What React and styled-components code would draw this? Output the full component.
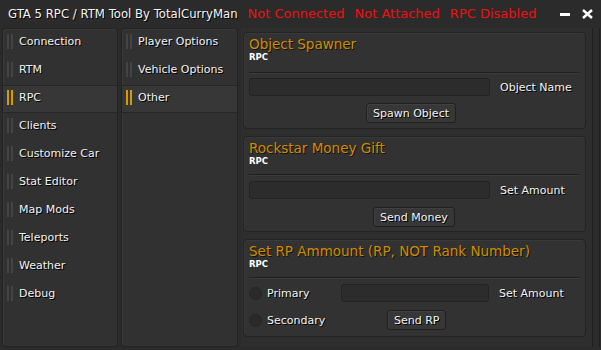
import React from "react";
import styled, { createGlobalStyle } from "styled-components";

const Global = createGlobalStyle`
  html, body { margin: 0; padding: 0; background: #2b2b2b; }
  body { font-family: "DejaVu Sans", Verdana, sans-serif; }
  * { box-sizing: border-box; }
`;

const Window = styled.div`
  width: 601px;
  height: 350px;
  background: #2b2b2b;
  display: flex;
  flex-direction: column;
  color: #f2f2f2;
  font-size: 11px;
  overflow: hidden;
`;

const TitleBar = styled.div`
  height: 28px;
  display: flex;
  align-items: center;
  padding: 0 6px 1px 8px;
  gap: 10px;
  white-space: nowrap;
`;

const Title = styled.span`
  color: #f4f4f4;
  font-size: 11.7px;
  text-shadow: 1px 1px 0 #000;
`;

const Status = styled.span`
  color: #ee1111;
  font-size: 13px;
`;

const WinButtons = styled.div`
  margin-left: auto;
  display: flex;
  align-items: center;
  gap: 12px;
  padding-right: 2px;
`;

const MinBtn = styled.div`
  width: 10px;
  height: 3px;
  background: #fff;
  margin-top: 2px;
`;

const Body = styled.div`
  flex: 1;
  display: flex;
  gap: 3px;
  padding: 0 1px 3px 2px;
`;

const Panel = styled.div`
  width: ${(p) => p.$w}px;
  background: #313131;
  border: 1px solid #222;
  border-radius: 3px;
  box-shadow: inset 1px 1px 0 #3a3a3a;
  display: flex;
  flex-direction: column;
`;

const NavItem = styled.div`
  height: 28px;
  display: flex;
  align-items: center;
  padding: 0 0 3px 4px;
  gap: 6px;
  font-size: 11px;
  color: #f2f2f2;
  text-shadow: 1px 1px 0 #000;
  border-top: 1px solid ${(p) => (p.$active ? "#262626" : "transparent")};
  border-bottom: 1px solid ${(p) => (p.$active ? "#262626" : "transparent")};
  background: ${(p) => (p.$active ? "#373737" : "transparent")};
`;

const Bars = styled.div`
  display: flex;
  gap: 2px;
  & > span {
    width: 2px;
    height: 15px;
    background: ${(p) => (p.$active ? "#d79a00" : "#444")};
  }
`;

const Content = styled.div`
  flex: 1;
  display: flex;
  background: #2e2e2e;
  border-right: 1px solid #1f1f1f;
  padding: 4px 0 0 2px;
`;

const Stack = styled.div`
  flex: 1;
  display: flex;
  flex-direction: column;
  gap: 7px;
`;

const Group = styled.div`
  height: ${(p) => p.$h}px;
  background: #323232;
  border: 1px solid #242424;
  border-radius: 4px;
  box-shadow: inset 1px 1px 0 #393939;
  padding: 4px 6px 0 5px;
  display: flex;
  flex-direction: column;
`;

const GroupTitle = styled.div`
  color: #d08c00;
  font-size: 13.5px;
  line-height: 15px;
  text-shadow: 1px 1px 0 #111;
`;

const Sub = styled.div`
  font-size: 8.5px;
  font-weight: bold;
  color: #fff;
  line-height: 10px;
`;

const Sep = styled.div`
  height: 1px;
  background: #1f1f1f;
  box-shadow: 0 1px 0 #3b3b3b;
  margin: ${(p) => p.$mt}px 0 ${(p) => p.$mb}px;
`;

const Row = styled.div`
  display: flex;
  align-items: center;
  height: 18px;
  margin-bottom: ${(p) => p.$mb || 0}px;
`;

const Input = styled.div`
  width: ${(p) => p.$w}px;
  height: 18px;
  background: #2c2c2c;
  border: 1px solid #232323;
  border-radius: 3px;
  margin-left: ${(p) => p.$ml || 0}px;
`;

const Label = styled.span`
  font-size: 11px;
  color: #f2f2f2;
  text-shadow: 1px 1px 0 #000;
  margin-left: ${(p) => p.$ml || 0}px;
  width: ${(p) => (p.$w ? p.$w + "px" : "auto")};
`;

const ButtonRow = styled.div`
  display: flex;
  align-items: center;
  height: 20px;
`;

const Button = styled.div`
  height: 20px;
  padding: 0 6px;
  background: #373737;
  border: 1px solid #202020;
  border-radius: 3px;
  box-shadow: inset 1px 1px 0 #404040;
  display: flex;
  align-items: center;
  font-size: 11px;
  text-shadow: 1px 1px 0 #000;
  margin-left: ${(p) => p.$ml}px;
`;

const Radio = styled.div`
  width: 13px;
  height: 13px;
  border-radius: 50%;
  background: #2a2a2a;
  border: 1px solid #262626;
  margin-right: 5px;
`;

const Scroll = styled.div`
  width: 7px;
  margin-left: 6px;
  border-left: 1px solid #1f1f1f;
  background: #2c2c2c;
  margin-top: -4px;
`;

const nav = [
  "Connection",
  "RTM",
  "RPC",
  "Clients",
  "Customize Car",
  "Stat Editor",
  "Map Mods",
  "Teleports",
  "Weather",
  "Debug",
];
const sub = ["Player Options", "Vehicle Options", "Other"];

const Item = ({ text, active }) => (
  <NavItem $active={active}>
    <Bars $active={active}>
      <span />
      <span />
    </Bars>
    {text}
  </NavItem>
);

export default function App() {
  return (
    <>
      <Global />
      <Window>
        <TitleBar>
          <Title>GTA 5 RPC / RTM Tool By TotalCurryMan</Title>
          <Status>Not Connected</Status>
          <Status>Not Attached</Status>
          <Status>RPC Disabled</Status>
          <WinButtons>
            <MinBtn />
            <svg width="11" height="10" viewBox="0 0 11 10">
              <path d="M1 1 L10 9 M10 1 L1 9" stroke="#fff" strokeWidth="2.4" />
            </svg>
          </WinButtons>
        </TitleBar>
        <Body>
          <Panel $w={116}>
            {nav.map((n) => (
              <Item key={n} text={n} active={n === "RPC"} />
            ))}
          </Panel>
          <Panel $w={117}>
            {sub.map((n) => (
              <Item key={n} text={n} active={n === "Other"} />
            ))}
          </Panel>
          <Content>
            <Stack>
              <Group $h={97}>
                <GroupTitle>Object Spawner</GroupTitle>
                <Sub>RPC</Sub>
                <Sep $mt={10} $mb={5} />
                <Row $mb={7}>
                  <Input $w={241} />
                  <Label $ml={10}>Object Name</Label>
                </Row>
                <ButtonRow>
                  <Button $ml={117}>Spawn Object</Button>
                </ButtonRow>
              </Group>
              <Group $h={96}>
                <GroupTitle>Rockstar Money Gift</GroupTitle>
                <Sub>RPC</Sub>
                <Sep $mt={8} $mb={6} />
                <Row $mb={8}>
                  <Input $w={241} />
                  <Label $ml={10}>Set Amount</Label>
                </Row>
                <ButtonRow>
                  <Button $ml={124}>Send Money</Button>
                </ButtonRow>
              </Group>
              <Group $h={98}>
                <GroupTitle>Set RP Ammount (RP, NOT Rank Number)</GroupTitle>
                <Sub>RPC</Sub>
                <Sep $mt={8} $mb={6} />
                <Row $mb={8}>
                  <Radio />
                  <Label $w={74}>Primary</Label>
                  <Input $w={148} />
                  <Label $ml={10}>Set Amount</Label>
                </Row>
                <ButtonRow>
                  <Radio />
                  <Label $w={74}>Secondary</Label>
                  <Button $ml={46}>Send RP</Button>
                </ButtonRow>
              </Group>
            </Stack>
            <Scroll />
          </Content>
        </Body>
      </Window>
    </>
  );
}
